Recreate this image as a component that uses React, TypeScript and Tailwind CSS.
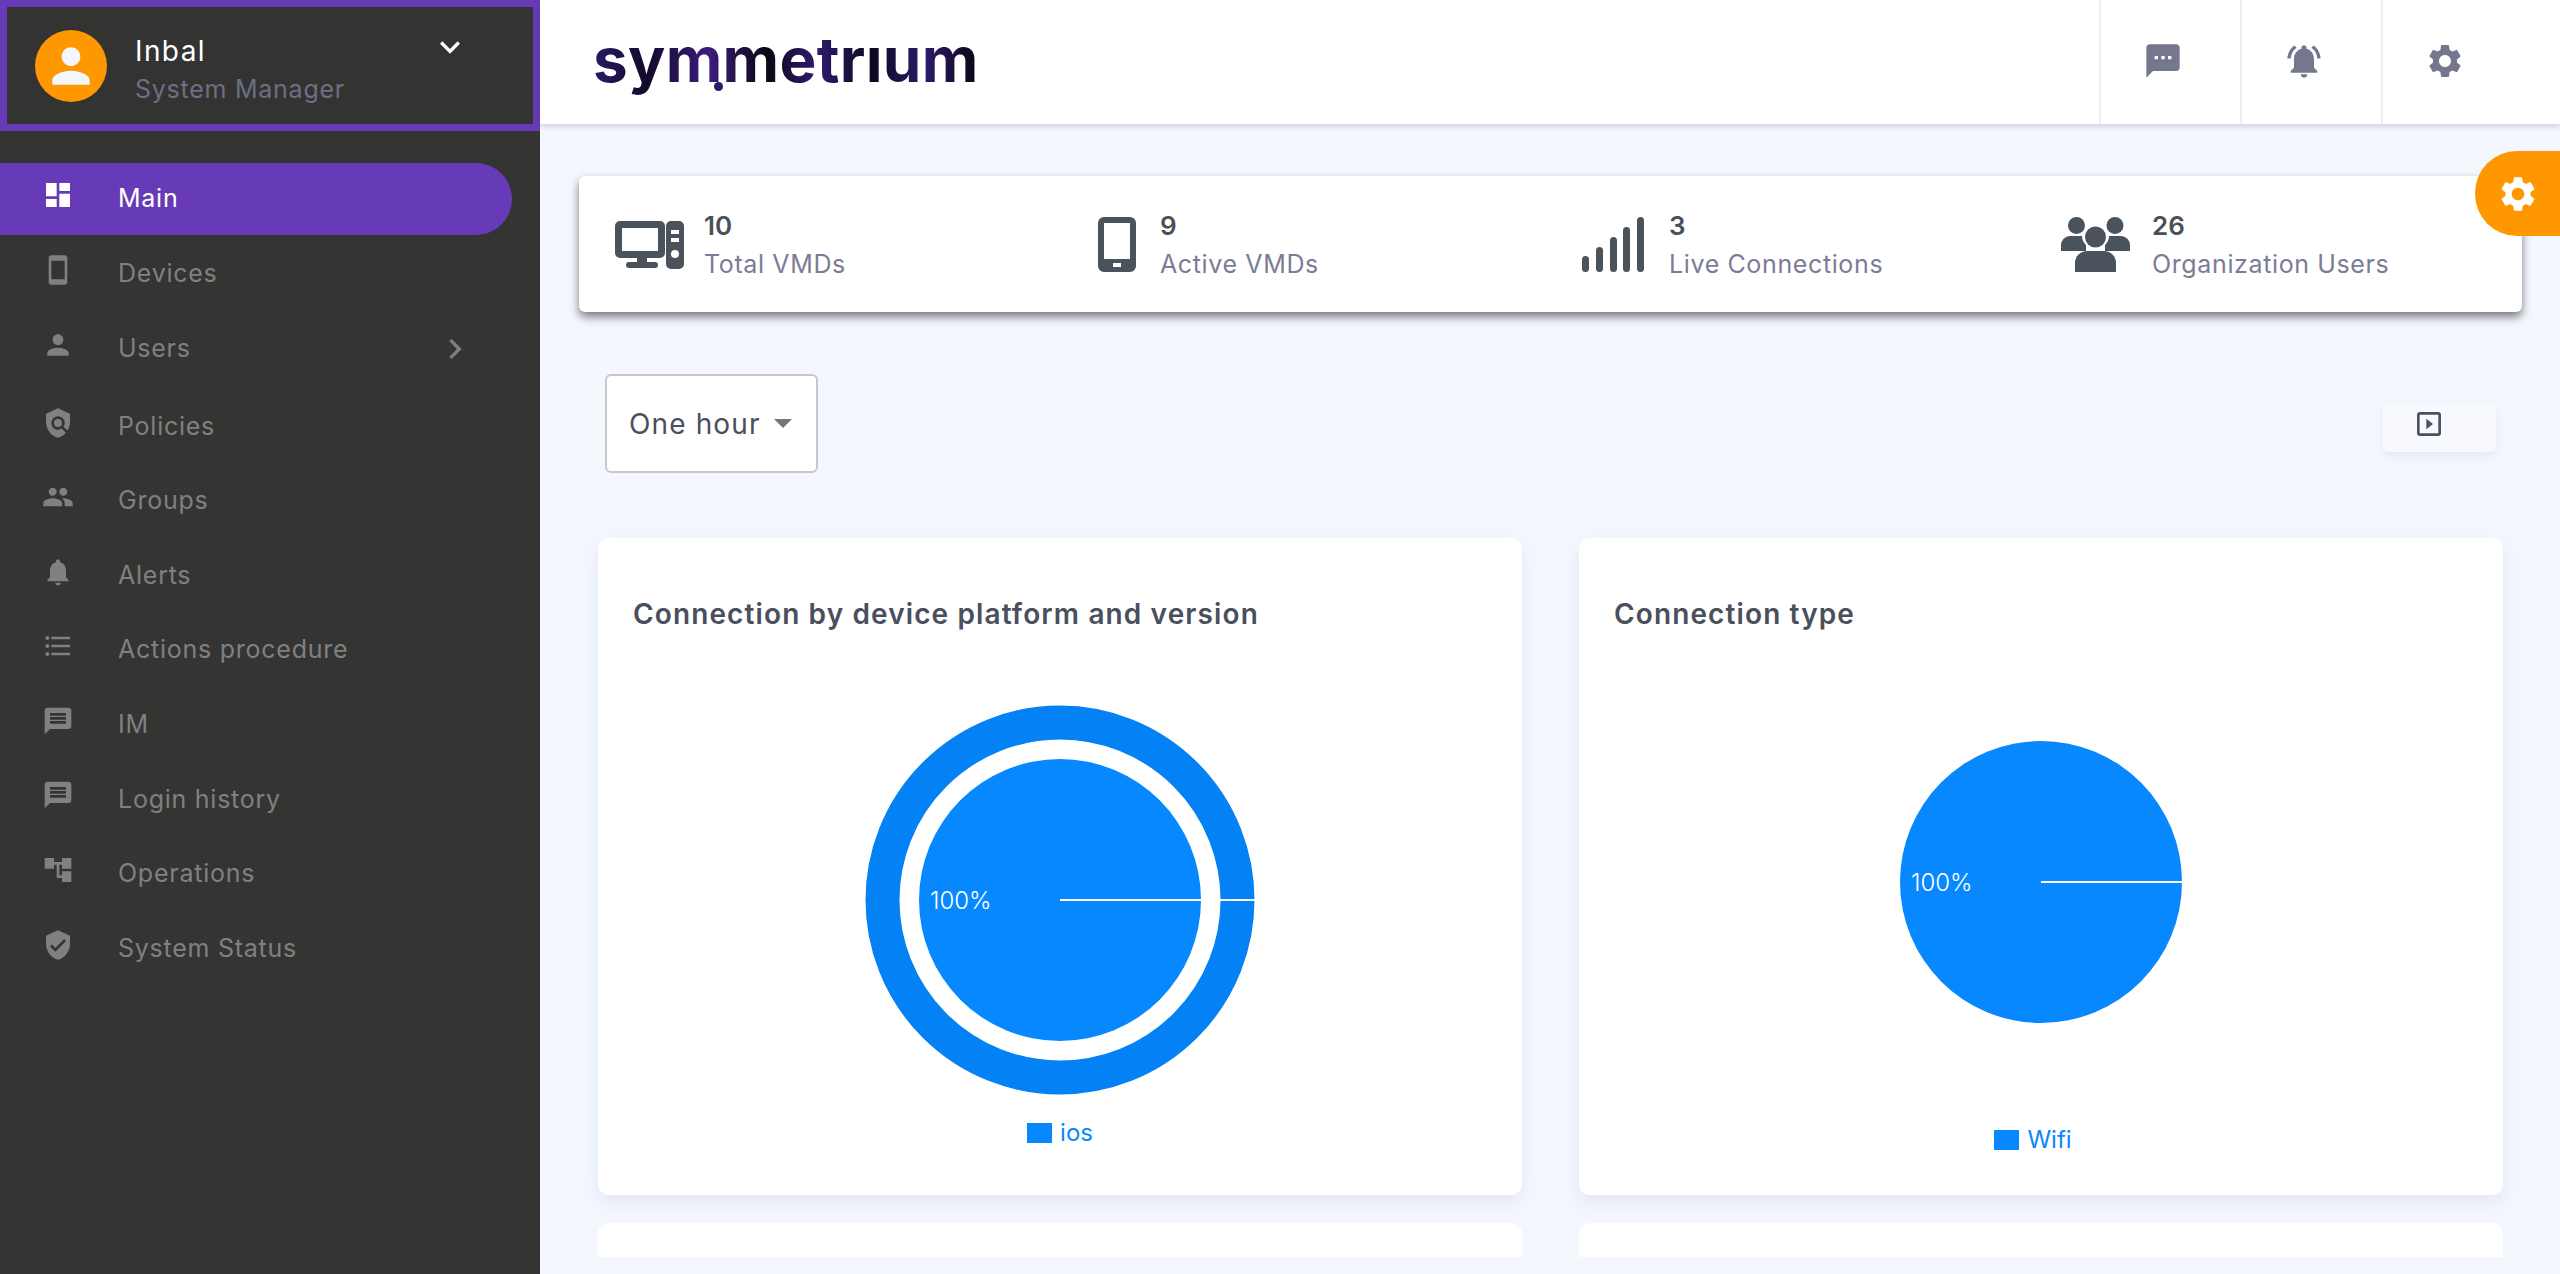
import {
  MdAccountTree,
  MdDashboard,
  MdFormatListBulleted,
  MdKeyboardArrowDown,
  MdKeyboardArrowRight,
  MdMessage,
  MdNotifications,
  MdNotificationsActive,
  MdOutlineSlideshow,
  MdPeople,
  MdPerson,
  MdPolicy,
  MdSettings,
  MdSmartphone,
  MdSms,
  MdVerifiedUser,
} from "react-icons/md";

const navItems = [
  { label: "Main", icon: MdDashboard, active: true, mb: "mb-[3px]" },
  { label: "Devices", icon: MdSmartphone, mb: "mb-[3px]" },
  { label: "Users", icon: MdPerson, arrow: true, mb: "mb-[6px]" },
  { label: "Policies", icon: MdPolicy, mb: "mb-[2px]" },
  { label: "Groups", icon: MdPeople, mb: "mb-[2.6px]" },
  { label: "Alerts", icon: MdNotifications, mb: "mb-[2.6px]" },
  { label: "Actions procedure", icon: MdFormatListBulleted, mb: "mb-[2.6px]" },
  { label: "IM", icon: MdMessage, mb: "mb-[2.6px]" },
  { label: "Login history", icon: MdMessage, mb: "mb-[2.6px]" },
  { label: "Operations", icon: MdAccountTree, mb: "mb-[2.6px]" },
  { label: "System Status", icon: MdVerifiedUser, mb: "mb-[3px]" },
];

function DesktopIcon() {
  return (
    <svg width="69" height="48" viewBox="0 0 69 48" fill="#4a525b">
      <path
        fillRule="evenodd"
        d="M5 0h40a5 5 0 0 1 5 5v27a5 5 0 0 1-5 5H32v4h8a3 3 0 0 1 0 6H14a3 3 0 0 1 0-6h8v-4H5a5 5 0 0 1-5-5V5a5 5 0 0 1 5-5Zm2 7v23h36V7Z"
      />
      <path
        fillRule="evenodd"
        d="M56 0h8a5 5 0 0 1 5 5v38a5 5 0 0 1-5 5h-8a5 5 0 0 1-5-5V5a5 5 0 0 1 5-5Zm0 9v4h8V9Zm0 8v4h8v-4Zm4 12a4 4 0 1 0 0 8 4 4 0 0 0 0-8Z"
      />
    </svg>
  );
}

function PhoneIcon() {
  return (
    <svg width="38" height="55" viewBox="0 0 38 55" fill="#4a525b">
      <path
        fillRule="evenodd"
        d="M6 0h26a6 6 0 0 1 6 6v43a6 6 0 0 1-6 6H6a6 6 0 0 1-6-6V6a6 6 0 0 1 6-6Zm0 6v36h26V6Zm9 40v4h8v-4Z"
      />
    </svg>
  );
}

function SignalIcon() {
  return (
    <svg width="62" height="55" viewBox="0 0 62 55" fill="#4a525b">
      <rect x="0" y="39" width="7" height="16" rx="3.5" />
      <rect x="14" y="30" width="7" height="25" rx="3.5" />
      <rect x="28" y="20" width="7" height="35" rx="3.5" />
      <rect x="41" y="10" width="7" height="45" rx="3.5" />
      <rect x="55" y="0" width="7" height="55" rx="3.5" />
    </svg>
  );
}

function UsersIcon() {
  return (
    <svg width="69" height="55" viewBox="0 0 69 55" fill="#4a525b">
      <circle cx="15.5" cy="8.5" r="8.5" />
      <circle cx="54" cy="8.5" r="8.5" />
      <path d="M0 34v-6a9 9 0 0 1 9-9h12a13 13 0 0 0 4 9v6Z" />
      <path d="M69 34v-6a9 9 0 0 0-9-9H48a13 13 0 0 1-4 9v6Z" />
      <circle cx="34.5" cy="20" r="10.5" />
      <path d="M14 55v-9a12 12 0 0 1 12-12h17a12 12 0 0 1 12 12v9Z" />
    </svg>
  );
}

const stats = [
  { value: "10", label: "Total VMDs", icon: <DesktopIcon />, gap: "gap-[20px]" },
  { value: "9", label: "Active VMDs", icon: <PhoneIcon />, gap: "ml-[1px] gap-[24px]" },
  { value: "3", label: "Live Connections", icon: <SignalIcon />, gap: "ml-[3px] gap-[25px]" },
  { value: "26", label: "Organization Users", icon: <UsersIcon />, gap: "gap-[22px]" },
];

function Sidebar() {
  return (
    <aside className="w-[540px] shrink-0 bg-[#343433]">
      <div className="flex h-[131px] items-center border-[7px] border-[#673ab7] bg-[#333331] pl-[28px]">
        <div className="flex h-[72px] w-[72px] items-center justify-center rounded-full bg-[#ff9800]">
          <MdPerson size={56} color="#f3f6fd" />
        </div>
        <div className="ml-[28px] mt-[8px]">
          <div className="text-[28px] leading-[38px] tracking-[0.05em] text-white">Inbal</div>
          <div className="text-[25px] leading-[38px] tracking-[0.03em] text-[#6c6f85]">System Manager</div>
        </div>
        <MdKeyboardArrowDown size={40} color="#fff" className="mb-[38px] ml-auto mr-[63px]" />
      </div>

      <nav className="pt-[32px]">
        {navItems.map((item) => {
          const Icon = item.icon;
          return (
            <div
              key={item.label}
              className={
                item.active
                  ? `${item.mb} flex h-[72px] w-[512px] items-center rounded-r-[36px] bg-[#673ab7] text-white`
                  : `${item.mb} flex h-[72px] w-[512px] items-center text-[#808080]`
              }
            >
              <Icon size={32} className="mb-[8px] ml-[42px]" />
              <span className="ml-[44px] text-[25px] tracking-[0.03em]">{item.label}</span>
              {item.arrow && <MdKeyboardArrowRight size={40} className="ml-auto mr-[37px]" />}
            </div>
          );
        })}
      </nav>
    </aside>
  );
}

function TopBar() {
  return (
    <header className="relative z-10 flex h-[124px] shrink-0 items-center justify-between bg-white pl-[53px] pr-[38px] shadow-[0_2px_6px_rgba(60,70,100,0.25)]">
      <div className="relative -mt-[5px]">
        <span
          aria-label="symmetrium"
          className="bg-[linear-gradient(90deg,#2a1a66_0%,#120a2a_14%,#3a1d7d_30%,#0b0714_45%,#2f1a70_58%,#0d0820_72%,#2b1a6a_86%,#0a0612_100%)] bg-clip-text text-[62px] font-bold leading-[124px] tracking-[0.005em] text-transparent"
        >
          symmetrıum
        </span>
        <span className="absolute left-[121px] top-[84px] h-[9px] w-[9px] rounded-full bg-[#2a1a66]" />
      </div>
      <div className="flex h-full">
        {[MdSms, MdNotificationsActive, MdSettings].map((Icon, i) => (
          <div key={i} className="flex w-[141px] items-center justify-center border-l-2 border-[#eeeeee] pb-[3px] pr-[15px]">
            <Icon size={40} color="#75778f" />
          </div>
        ))}
      </div>
    </header>
  );
}

function Pie(props: { outer?: boolean }) {
  return (
    <svg width="924" height="400" viewBox="-462 -200 924 400" className="block">
      {props.outer && (
        <>
          <circle r="177.5" fill="none" stroke="#0481f5" strokeWidth="34" />
          <line x1="160" y1="0" x2="195" y2="0" stroke="#fff" strokeWidth="2" />
        </>
      )}
      <circle r="141" fill="#0788ff" />
      <line x1="0" y1="0" x2="141" y2="0" stroke="#fff" strokeWidth="2" />
      <text x="-130" y="9" fill="#fff" fontSize="24" fontWeight="300">
        100%
      </text>
    </svg>
  );
}

function ChartCard(props: {
  title: string;
  legend: string;
  outer?: boolean;
  chartTop: string;
  legendTop: string;
}) {
  return (
    <div className="h-[657px] rounded-[10px] bg-white pt-[56px] shadow-[0_8px_20px_rgba(80,100,150,0.1)]">
      <h2 className="pl-[35px] text-[28px] font-semibold leading-[40px] tracking-[0.04em] text-[#4a4f5c]">{props.title}</h2>
      <div className={props.chartTop}>
        <Pie outer={props.outer} />
      </div>
      <div className={`flex items-center justify-center gap-[8px] text-[24px] leading-[26px] text-[#0788ff] ${props.legendTop}`}>
        <span className="h-[20px] w-[25px] bg-[#0788ff]" />
        {props.legend}
      </div>
    </div>
  );
}

export default function App() {
  return (
    <div className="flex h-[1274px] w-full overflow-hidden bg-[#f4f7fe] font-[Inter,sans-serif]">
      <Sidebar />
      <main className="flex min-w-0 flex-1 flex-col">
        <TopBar />
        <div className="relative h-[1133px] overflow-hidden pl-[39px] pr-[38px] pt-[52px]">
          <div className="absolute right-0 top-[27px] z-10 flex h-[85px] w-[85px] items-center justify-center rounded-l-[42px] bg-[#ff9800]">
            <MdSettings size={42} color="#fff" />
          </div>

          <section className="grid h-[136px] grid-cols-[repeat(4,482px)] rounded-[6px] bg-white pl-[36px] pt-[31px] shadow-[0_5px_10px_rgba(0,0,0,0.5)]">
            {stats.map((s) => (
              <div key={s.label} className={`flex h-[75px] items-center ${s.gap}`}>
                {s.icon}
                <div>
                  <div className="text-[26px] font-semibold leading-[36px] text-[#4a4f58]">{s.value}</div>
                  <div className="mt-[2px] text-[25px] leading-[36px] tracking-[0.025em] text-[#7a7d95]">{s.label}</div>
                </div>
              </div>
            ))}
          </section>

          <div className="mx-[26px] mt-[62px] flex h-[99px] items-center justify-between">
            <div className="flex h-full w-[213px] items-center rounded-[6px] border-2 border-[#c8c8c8] bg-white pl-[22px] text-[28px] tracking-[0.04em] text-[#4a4f5c]">
              One hour
              <span className="ml-[13px] h-0 w-0 border-x-[9px] border-t-[9px] border-x-transparent border-t-[#757575]" />
            </div>
            <div className="mt-[8px] flex h-[49px] w-[113px] items-center justify-center rounded-[6px] bg-[#f7f9fe] pb-[7px] pr-[22px] shadow-[0_4px_10px_rgba(80,100,150,0.1)]">
              <MdOutlineSlideshow size={32} color="#4a525b" />
            </div>
          </div>

          <div className="ml-[19px] mt-[65px] grid grid-cols-[repeat(2,924px)] gap-x-[57px] gap-y-[28px]">
            <ChartCard
              title="Connection by device platform and version"
              legend="ios"
              outer
              chartTop="mt-[66px]"
              legendTop="mt-[20px]"
            />
            <ChartCard
              title="Connection type"
              legend="Wifi"
              chartTop="mt-[48px]"
              legendTop="mt-[45px] pr-[16px]"
            />
            <div className="h-[200px] rounded-[10px] bg-white" />
            <div className="h-[200px] rounded-[10px] bg-white" />
          </div>
        </div>
      </main>
    </div>
  );
}
